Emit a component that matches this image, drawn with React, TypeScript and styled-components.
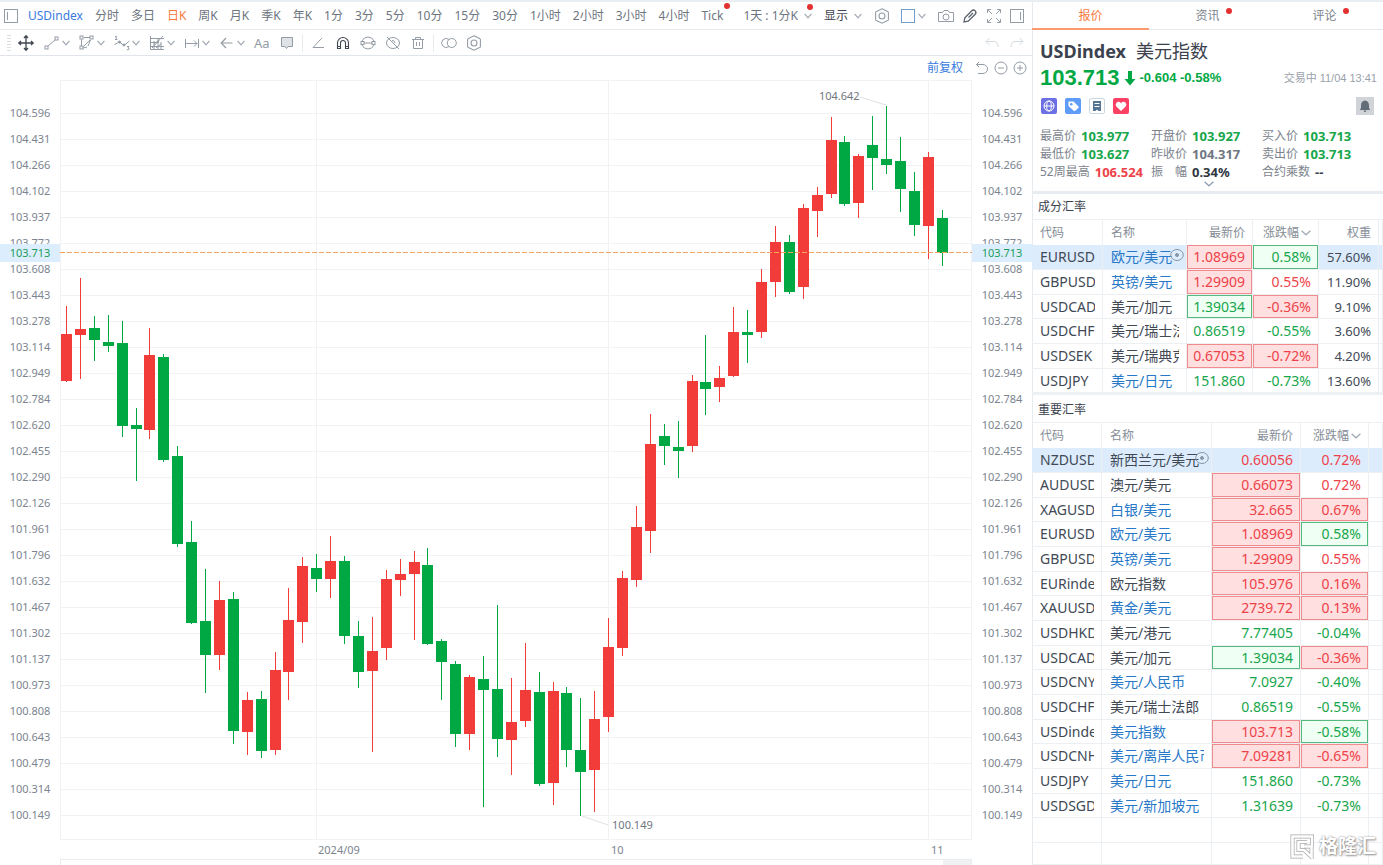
import React from "react";
import styled, { createGlobalStyle, css } from "styled-components";

const RED = "#f23c3a";
const GREEN = "#00a843";
const LINE = "#edf0f3";
const ICON = "#949ca6";

const GlobalStyle = createGlobalStyle`
  *, *::before, *::after { box-sizing: border-box; }
  body {
    margin: 0;
    background: #fff;
    color: #3b424d;
    font-family: "Noto Sans", "Noto Sans CJK SC", sans-serif;
    font-size: 12px;
    line-height: 18px;
  }
  button {
    margin: 0;
    padding: 0;
    border: 0;
    background: none;
    color: inherit;
    font: inherit;
    white-space: nowrap;
    cursor: pointer;
  }
  svg { display: block; }
`;

/* ---------- page frame ---------- */

const Page = styled.div`
  display: grid;
  grid-template-columns: minmax(0, 1fr) 351px;
  min-height: 100vh;
  border-top: 2px solid #e9eef3;
`;

const ChartPanel = styled.main`
  display: flex;
  flex-direction: column;
  min-width: 0;
`;

const SidePanel = styled.aside`
  position: relative;
  display: flex;
  flex-direction: column;
  box-shadow: inset 1px 0 #e6ebf0;
`;

/* ---------- toolbars ---------- */

const PeriodBar = styled.nav`
  display: flex;
  align-items: center;
  gap: 12px;
  height: 28px;
  padding: 0 8px 0 4px;
  border-bottom: 1px solid #e4e9ee;
  color: #6d7580;
`;

const DrawBar = styled.div`
  display: flex;
  align-items: center;
  gap: 9px;
  height: 26px;
  padding: 0 7px;
  border-bottom: 1px solid #dfe5ea;
  color: #8d96a1;
`;

const ViewBar = styled.div`
  display: flex;
  align-items: center;
  justify-content: flex-end;
  gap: 12px;
  height: 24px;
  padding-right: 5px;
  color: #9199a3;
`;

const toneColor = { plain: "inherit", active: "#f77a3c", link: "#3a7be0", dark: "#3f4650" };

const BarButton = styled.button<{ $tone?: keyof typeof toneColor }>`
  position: relative;
  display: flex;
  align-items: center;
  gap: 6px;
  color: ${(p) => toneColor[p.$tone ?? "plain"]};
`;

const IconButton = styled.button<{ $tone?: string }>`
  display: flex;
  align-items: center;
  gap: 2px;
  color: ${(p) => p.$tone ?? ICON};
`;

const TextTool = styled(IconButton)`
  font-size: 13px;
`;

const Dot = styled.i<{ $top: number; $right: number }>`
  position: absolute;
  top: ${(p) => p.$top}px;
  right: ${(p) => p.$right}px;
  width: 6px;
  height: 6px;
  border-radius: 50%;
  background: #e53030;
`;

const Divider = styled.i<{ $pull: number }>`
  width: 1px;
  height: 18px;
  margin: 0 -${(p) => p.$pull}px;
  background: #e8ecf0;
`;

const Grip = styled.i`
  width: 4px;
  height: 16px;
  margin-right: -3px;
  background: repeating-linear-gradient(#d9dee3 0 1px, transparent 1px 3px);
`;

const Toolset = styled.div<{ $gap: number; $end?: boolean }>`
  display: flex;
  align-items: center;
  gap: ${(p) => p.$gap}px;
  margin-left: ${(p) => (p.$end ? "auto" : "0")};
`;

/* ---------- chart ---------- */

const ChartGrid = styled.div`
  position: relative;
  flex: 1;
  display: grid;
  grid-template-columns: 60px minmax(0, 1fr) 60px;
  min-height: 560px;
`;

const Axis = styled.ol`
  position: relative;
  display: flex;
  flex-direction: column;
  margin: 0;
  padding: 20px 0 12px;
  list-style: none;
  color: #7c848f;
  font-size: 11px;
  line-height: 14px;
`;

const AxisLabel = styled.li`
  flex: 1;
  display: flex;
  align-items: center;
  justify-content: center;
`;

const PriceTag = styled.li`
  position: absolute;
  top: 164px;
  left: 0;
  right: 0;
  height: 18px;
  line-height: 18px;
  text-align: center;
  background: #dceefe;
  color: #1a9c5b;
`;

const Plot = styled.div`
  position: relative;
`;

const PlotSvg = styled.svg`
  position: absolute;
  inset: 0;
  width: 100%;
  height: 100%;
`;

const Callout = styled.span<{ $x: number; $y: number }>`
  position: absolute;
  left: ${(p) => p.$x}%;
  top: ${(p) => p.$y}%;
  padding-left: 2px;
  color: #6f7680;
  font-size: 11px;
  line-height: 16px;
`;

const DateRow = styled.div`
  display: grid;
  grid-template-columns: 258fr 293fr 320fr 41fr;
  height: 19px;
  margin: 0 60px;
  color: #7c848f;
  font-size: 11px;
  line-height: 20px;
`;

const ScrollStrip = styled.div`
  display: flex;
  justify-content: flex-end;
  height: 6px;
  margin: 0 60px;
  border: 1px solid #e9edf0;
  border-bottom: 0;
`;

const ScrollThumb = styled.div`
  width: 28px;
  background: #f0f1f2;
`;

/* ---------- quote header ---------- */

const Tabs = styled.div`
  display: grid;
  grid-template-columns: repeat(3, 1fr);
  height: 28px;
  border-bottom: 1px solid #e4e9ee;
`;

const Tab = styled.button<{ $active?: boolean }>`
  position: relative;
  height: 28px;
  padding-top: 2px;
  color: ${(p) => (p.$active ? "#f77a3c" : "#7c838d")};
  border-bottom: 2px solid ${(p) => (p.$active ? "#fb9a6c" : "transparent")};
`;

const TabLabel = styled.span`
  position: relative;
`;

const Quote = styled.section`
  height: 164px;
  padding: 9px 6px 0 8px;
  border-bottom: 3px solid #e8ecf0;
`;

const Title = styled.h1`
  display: flex;
  gap: 10px;
  margin: 0;
  font-size: 18px;
  line-height: 24px;
  font-weight: 700;
`;

const TitleName = styled.span`
  font-weight: 400;
`;

const PriceRow = styled.div`
  display: flex;
  align-items: center;
  gap: 4px;
  height: 30px;
  color: ${GREEN};
  font-family: "Liberation Sans", sans-serif;
  font-weight: 700;
`;

const Price = styled.strong`
  font-size: 22px;
`;

const Change = styled.span`
  font-size: 13px;
`;

const Status = styled.span`
  margin-left: auto;
  color: #9aa1ab;
  font: 400 11px/18px "Liberation Sans", "Noto Sans CJK SC", sans-serif;
`;

const BadgeRow = styled.div`
  display: flex;
  align-items: center;
  gap: 8px;
  height: 18px;
  margin: 4px 3px 0 1px;
`;

const Badge = styled.button<{ $bg: string }>`
  display: flex;
  width: 16px;
  height: 16px;
  border-radius: 2px;
  background: ${(p) => p.$bg};
`;

const Bell = styled(Badge)`
  width: 18px;
  height: 18px;
  margin-left: auto;
  padding: 1px;
  border-radius: 0;
`;

const Stats = styled.dl`
  display: grid;
  grid-template-columns: 111px 111px 1fr;
  margin: 12px 0 0;
`;

const Stat = styled.div`
  display: flex;
  gap: 5px;
  white-space: nowrap;
`;

const StatLabel = styled.dt`
  color: #7c838d;
`;

const StatValue = styled.dd<{ $color: string }>`
  margin: 0;
  color: ${(p) => p.$color};
  font-size: 13px;
  font-weight: 700;
`;

const MoreButton = styled.button`
  display: block;
  margin: 0 auto;
`;

/* ---------- rate tables ---------- */

const SectionTitle = styled.h2<{ $height: number }>`
  height: ${(p) => p.$height}px;
  margin: 0;
  padding-left: 6px;
  border-bottom: 1px solid ${LINE};
  font-size: 12px;
  font-weight: 400;
  line-height: ${(p) => p.$height - 1}px;
`;

const RateTable = styled.table`
  width: 100%;
  table-layout: fixed;
  border-collapse: separate;
  border-spacing: 0;
  color: #414955;
  & + h2 { border-top: 2px solid #eef1f4; }
`;

const Row = styled.tr<{ $selected?: boolean }>`
  height: 25px;
  background: ${(p) => (p.$selected ? "#dcecfd" : "transparent")};
  &:nth-child(3n) { height: 24px; }
  &:nth-child(17) { height: 22px; }
`;

const HeadCell = styled.th<{ $right?: boolean }>`
  height: 25px;
  padding: 0 7px 0 8px;
  border-right: 1px solid ${LINE};
  color: #858c96;
  font-size: 12px;
  font-weight: 400;
  line-height: 24px;
  text-align: ${(p) => (p.$right ? "right" : "left")};
  white-space: nowrap;
`;

const SortLabel = styled.button`
  display: inline-flex;
  align-items: center;
  gap: 2px;
`;

type Mark = "r" | "g" | "";
const boxed = {
  r: css`background: #ffdfdf; box-shadow: inset 0 0 0 1px #f18a8c;`,
  g: css`background: #effff4; box-shadow: inset 0 0 0 1px #55b97d;`,
};

const Cell = styled.td`
  position: relative;
  padding: 0 7px 0 8px;
  border-right: 1px solid ${LINE};
  border-bottom: 1px solid ${LINE};
  font-size: 14px;
  line-height: 22px;
`;

const NumCell = styled(Cell)<{ $up: boolean; $box?: Mark }>`
  padding: 0 7px 0 0;
  color: ${(p) => (p.$up ? "#ee4249" : "#17a64b")};
  text-align: right;
  ${(p) => (p.$box ? boxed[p.$box] : "")}
`;

const WeightCell = styled(Cell)`
  padding: 0 7px 0 0;
  font-size: 13px;
  text-align: right;
`;

const Clip = styled.div<{ $link?: boolean }>`
  overflow: hidden;
  white-space: nowrap;
  color: ${(p) => (p.$link ? "#2878c8" : "inherit")};
`;

const Eye = styled.svg`
  position: absolute;
  top: 3px;
  right: 2px;
`;

const Watermark = styled.div`
  position: absolute;
  right: 7px;
  bottom: 6px;
  display: flex;
  align-items: center;
  gap: 4px;
  color: #fff;
  font-size: 19px;
  font-weight: 700;
  line-height: 26px;
  text-shadow: 0 0 2px #888, 1px 1px 2px #999;
`;

/* ---------- icons ---------- */

const Icon = ({ children, size = 16, w = 1 }: { children: React.ReactNode; size?: number; w?: number }) => (
  <svg width={size} height={size} viewBox={`0 0 ${size} ${size}`} fill="none" stroke="currentColor" strokeWidth={w} aria-hidden="true">
    {children}
  </svg>
);

const Chevron = ({ color = "#a3abb5", width = 8 }: { color?: string; width?: number }) => (
  <svg width={width} height="6" viewBox={`0 0 ${width} 6`} fill="none" stroke={color} strokeWidth="1.3" aria-hidden="true">
    <path d={`M.6 .8 ${width / 2} 4.800 ${width - 0.6} .8`} />
  </svg>
);

const HexIcon = () => (
  <Icon w={1.1}>
    <path d="M8 .8 13.6 3.4Q14.4 3.8 14.4 4.6V11.4Q14.4 12.2 13.6 12.6L8 15.2 2.4 12.6Q1.6 12.2 1.6 11.4V4.6Q1.6 3.8 2.4 3.4Z" />
    <circle cx="8" cy="8" r="3" />
  </Icon>
);

const drawMenus: [string, React.ReactNode][] = [
  ["线段", <Icon key="a"><rect x="11" y="2" width="3" height="3" /><rect x="1" y="11" width="3" height="3" /><path d="M4 11 11 5" /></Icon>],
  ["形状", <Icon key="b"><path d="M2.500 4.500V11M5 2.500H11M11.500 5 9 11M8 12 4 13M4.500 11.500 11 5" /><rect x="1" y="1" width="3" height="3" /><rect x="11" y="1" width="3" height="3" /><rect x="1" y="11" width="3" height="3" /></Icon>],
  ["波浪", <Icon key="c"><path d="M.5 9.500 5.500 7 10 10.500 15.500 6M1 2 2.200 1V4.500M1 4.500H3.400M13 11.500H15L14 12.800Q15.500 13 15 14.200 14.300 15.300 12.800 14.600" /><circle cx="5.5" cy="7" r="1" fill="currentColor" /><circle cx="10" cy="10" r="1" fill="currentColor" /></Icon>],
  ["斐波那契", <Icon key="d"><path d="M1.500 1V14.500H15M1.500 3.500H15M1.500 7.500H10M1.500 11.500H15M5 14V6M9 14V3.500M12 14V7M3 13 14 1M5 9 10 5M7 13 12 9" /></Icon>],
  ["测量", <Icon key="e"><path d="M1.500 4V13M14.500 4V13M2 8.500H13M10 5.500 13 8.500 10 11.500" /></Icon>],
  ["箭头", <Icon key="f" w={1.2}><path d="M2.500 8H13.500M7 3 2.200 8 7 13" /></Icon>],
];

/* ---------- data ---------- */

const periods = ["分时", "多日", "日K", "周K", "月K", "季K", "年K", "1分", "3分", "5分", "10分", "15分", "30分", "1小时", "2小时", "3小时", "4小时"];

const prices = [
  "104.596", "104.431", "104.266", "104.102", "103.937", "103.772", "103.608", "103.443", "103.278", "103.114",
  "102.949", "102.784", "102.620", "102.455", "102.290", "102.126", "101.961", "101.796", "101.632", "101.467",
  "101.302", "101.137", "100.973", "100.808", "100.643", "100.479", "100.314", "100.149",
];

/* direction, then high, body top, body bottom and low on the plot's vertical scale */
const candles: [Mark, number, number, number, number][] = [
  ["r", 306, 334, 381, 382], ["r", 278, 329, 335, 379], ["g", 316, 328, 340, 361], ["g", 315, 342, 346, 352],
  ["g", 321, 343, 426, 437], ["g", 408, 425, 429, 481], ["r", 328, 355, 430, 439], ["g", 354, 357, 460, 462],
  ["g", 446, 456, 544, 547], ["g", 521, 542, 623, 624], ["g", 569, 621, 655, 693], ["r", 581, 600, 655, 670],
  ["g", 592, 599, 731, 744], ["r", 692, 700, 732, 755], ["g", 691, 699, 751, 758], ["r", 652, 670, 750, 755],
  ["r", 588, 620, 672, 700], ["r", 557, 566, 622, 643], ["g", 554, 568, 579, 592], ["r", 536, 561, 579, 598],
  ["g", 556, 561, 636, 644], ["g", 621, 636, 672, 688], ["r", 617, 651, 671, 752], ["r", 570, 579, 648, 660],
  ["r", 559, 574, 580, 596], ["r", 551, 562, 574, 640], ["g", 548, 565, 644, 645], ["g", 639, 641, 662, 700],
  ["g", 661, 664, 734, 747], ["r", 675, 677, 734, 750], ["g", 656, 679, 690, 807], ["g", 605, 689, 739, 757],
  ["r", 678, 722, 740, 775], ["r", 643, 690, 721, 727], ["g", 672, 692, 784, 786], ["r", 682, 691, 783, 805],
  ["g", 687, 693, 750, 767], ["g", 698, 750, 772, 816], ["r", 691, 719, 770, 812], ["r", 618, 647, 717, 732],
  ["r", 571, 578, 648, 656], ["r", 506, 527, 580, 587], ["r", 414, 444, 531, 553], ["g", 424, 436, 446, 465],
  ["g", 421, 447, 451, 478], ["r", 375, 381, 446, 452], ["g", 335, 382, 389, 415], ["r", 366, 378, 387, 402],
  ["r", 307, 332, 376, 377], ["g", 310, 332, 335, 363], ["r", 269, 282, 332, 338], ["r", 226, 242, 282, 297],
  ["g", 235, 242, 292, 294], ["r", 204, 208, 287, 299], ["r", 187, 195, 211, 237], ["r", 117, 140, 194, 198],
  ["g", 136, 142, 204, 206], ["r", 154, 156, 203, 218], ["g", 116, 145, 158, 190], ["g", 106, 159, 165, 174],
  ["g", 137, 161, 189, 212], ["g", 172, 191, 225, 236], ["r", 152, 157, 226, 259], ["g", 210, 218, 253, 266],
];

const stats: [string, string, string][] = [
  ["最高价", "103.977", "#17a64b"], ["开盘价", "103.927", "#17a64b"], ["买入价", "103.713", "#17a64b"],
  ["最低价", "103.627", "#17a64b"], ["昨收价", "104.317", "#6f7782"], ["卖出价", "103.713", "#17a64b"],
  ["52周最高", "106.524", "#ee4249"], ["振\u3000幅", "0.34%", "#2f3742"], ["合约乘数", "--", "#3b424d"],
];

interface Rate {
  code: string;
  name: string;
  link?: boolean;
  price: string;
  priceUp: boolean;
  priceBox?: Mark;
  pct: string;
  pctUp: boolean;
  pctBox?: Mark;
  weight?: string;
}

const rate = (code: string, name: string, link: boolean, price: string, p: string, pct: string, c: string, weight?: string): Rate => ({
  code, name, link, price, pct, weight,
  priceUp: p[0] === "u",
  priceBox: (p[1] ?? "") as Mark,
  pctUp: c[0] === "u",
  pctBox: (c[1] ?? "") as Mark,
});

const components: Rate[] = [
  rate("EURUSD", "欧元/美元", true, "1.08969", "ur", "0.58%", "dg", "57.60%"),
  rate("GBPUSD", "英镑/美元", true, "1.29909", "ur", "0.55%", "u", "11.90%"),
  rate("USDCAD", "美元/加元", false, "1.39034", "dg", "-0.36%", "ur", "9.10%"),
  rate("USDCHF", "美元/瑞士法郎", false, "0.86519", "d", "-0.55%", "d", "3.60%"),
  rate("USDSEK", "美元/瑞典克朗", false, "0.67053", "ur", "-0.72%", "ur", "4.20%"),
  rate("USDJPY", "美元/日元", true, "151.860", "d", "-0.73%", "d", "13.60%"),
];

const majors: Rate[] = [
  rate("NZDUSD", "新西兰元/美元", false, "0.60056", "u", "0.72%", "u"),
  rate("AUDUSD", "澳元/美元", false, "0.66073", "ur", "0.72%", "u"),
  rate("XAGUSD", "白银/美元", true, "32.665", "ur", "0.67%", "ur"),
  rate("EURUSD", "欧元/美元", true, "1.08969", "ur", "0.58%", "dg"),
  rate("GBPUSD", "英镑/美元", true, "1.29909", "ur", "0.55%", "u"),
  rate("EURindex", "欧元指数", false, "105.976", "ur", "0.16%", "ur"),
  rate("XAUUSD", "黄金/美元", true, "2739.72", "ur", "0.13%", "ur"),
  rate("USDHKD", "美元/港元", false, "7.77405", "d", "-0.04%", "d"),
  rate("USDCAD", "美元/加元", false, "1.39034", "dg", "-0.36%", "ur"),
  rate("USDCNY", "美元/人民币", true, "7.0927", "d", "-0.40%", "d"),
  rate("USDCHF", "美元/瑞士法郎", false, "0.86519", "d", "-0.55%", "d"),
  rate("USDindex", "美元指数", true, "103.713", "ur", "-0.58%", "dg"),
  rate("USDCNH", "美元/离岸人民币", true, "7.09281", "ur", "-0.65%", "ur"),
  rate("USDJPY", "美元/日元", true, "151.860", "d", "-0.73%", "d"),
  rate("USDSGD", "美元/新加坡元", true, "1.31639", "d", "-0.73%", "d"),
];

/* ---------- pieces ---------- */

function PriceAxis() {
  return (
    <Axis>
      {prices.map((p) => <AxisLabel key={p}>{p}</AxisLabel>)}
      <PriceTag>103.713</PriceTag>
    </Axis>
  );
}

function CandlePlot() {
  return (
    <Plot>
      <PlotSvg viewBox="60 80 912 760" preserveAspectRatio="none" role="img" aria-label="USDindex 日K">
        <g fill="#f0f2f3">
          {prices.map((p, i) => <rect key={p} x="60" y={113 + i * 26} width="912" height="1" />)}
          {[60, 316, 608, 928, 971].map((x) => <rect key={x} x={x} y="80" width="1" height="760" />)}
          <rect x="60" y="80" width="912" height="1" />
          <rect x="60" y="839" width="912" height="1" />
        </g>
        <path d="M860 97 886 105M582 816 608 825" stroke="#dde1e5" fill="none" />
        {candles.map(([dir, high, top, bottom, low], i) => {
          const x = Math.round(61 + i * 13.9);
          return (
            <g key={i} fill={dir === "r" ? RED : GREEN}>
              <rect x={x + 5} y={high} width="1" height={low - high} />
              <rect x={x} y={top} width="11" height={bottom - top} />
            </g>
          );
        })}
        <line x1="60" y1="252.5" x2="972" y2="252.5" stroke="#f5a35f" strokeDasharray="5 2" />
      </PlotSvg>
      <Callout $x={83} $y={1}>104.642</Callout>
      <Callout $x={60} $y={97}>&nbsp;100.149</Callout>
    </Plot>
  );
}

function Rates({ rows, widths, blanks = 0 }: { rows: Rate[]; widths: number[]; blanks?: number }) {
  const weighted = rows[0].weight !== undefined;
  return (
    <RateTable>
      <colgroup>
        {widths.map((w, i) => <col key={i} width={w} />)}
        <col />
      </colgroup>
      <thead>
        <tr>
          <HeadCell>代码</HeadCell>
          <HeadCell>名称</HeadCell>
          <HeadCell $right>最新价</HeadCell>
          <HeadCell $right><SortLabel>涨跌幅<Chevron width={10} /></SortLabel></HeadCell>
          {weighted && <HeadCell $right>权重</HeadCell>}
          <HeadCell aria-hidden="true" />
        </tr>
      </thead>
      <tbody>
        {rows.map((r, i) => (
          <Row key={r.code} $selected={i === 0}>
            <Cell><Clip>{r.code}</Clip></Cell>
            <Cell>
              <Clip $link={r.link}>{r.name}</Clip>
              {i === 0 && (
                <Eye width="14" height="14" viewBox="0 0 14 14" fill="none" stroke="#8b97a5" aria-hidden="true">
                  <ellipse cx="7" cy="7" rx="6.300" ry="5.500" />
                  <circle cx="7" cy="7" r="1.500" fill="#8b97a5" />
                </Eye>
              )}
            </Cell>
            <NumCell $up={r.priceUp} $box={r.priceBox}>{r.price}</NumCell>
            <NumCell $up={r.pctUp} $box={r.pctBox}>{r.pct}</NumCell>
            {weighted && <WeightCell>{r.weight}</WeightCell>}
            <Cell />
          </Row>
        ))}
        {Array.from({ length: blanks }, (_, i) => (
          <Row key={`blank-${i}`}><Cell /><Cell /><Cell /><Cell /><Cell /></Row>
        ))}
      </tbody>
    </RateTable>
  );
}

export default function App() {
  return (
    <>
      <GlobalStyle />
      <Page>
        <ChartPanel>
          <PeriodBar>
            <Toolset $gap={10}>
              <IconButton aria-label="侧栏"><Icon size={14}><rect x=".5" y=".5" width="13" height="13" /><path d="M3.500 3V11" /></Icon></IconButton>
              <BarButton $tone="link">USDindex</BarButton>
            </Toolset>
            {periods.map((p) => <BarButton key={p} $tone={p === "日K" ? "active" : "plain"}>{p}</BarButton>)}
            <BarButton>Tick<Dot $top={-4} $right={-7} /></BarButton>
            <Divider $pull={2} />
            <BarButton>1天 : 1分K<Chevron /><Dot $top={-3} $right={-1} /></BarButton>
            <BarButton $tone="dark">显示<Chevron /></BarButton>
            <Divider $pull={6} />
            <Toolset $gap={10}>
              <IconButton aria-label="设置"><HexIcon /></IconButton>
              <IconButton aria-label="布局">
                <Icon><rect x="1.500" y="1.500" width="13" height="13" stroke="#6f9fca" /></Icon>
                <Chevron />
              </IconButton>
            </Toolset>
            <Toolset $gap={8} $end>
              <IconButton aria-label="截图">
                <Icon><path d="M.5 4.500H4.500L6 2.500H10L11.500 4.500H15.500V13.500H.5Z" /><circle cx="8" cy="9" r="3" /></Icon>
              </IconButton>
              <IconButton aria-label="画笔" $tone="#5a626d">
                <Icon w={1.3}><path d="M2 14 2.800 9.800 9.800 2.800Q11.500 1.200 13.200 2.900 14.700 4.600 13.200 6.200L6.200 13.200ZM6.500 9.500 11 5" /></Icon>
              </IconButton>
              <IconButton aria-label="全屏">
                <Icon><path d="M1.500 5V1.500H5M11 1.500H14.500V5M14.500 11V14.500H11M5 14.500H1.500V11M2 2 6 6M14 2 10 6M14 14 10 10M2 14 6 10" /></Icon>
              </IconButton>
              <IconButton aria-label="面板">
                <Icon size={14}><rect x=".5" y=".5" width="13" height="13" /><path d="M10.500 3V11" /></Icon>
              </IconButton>
            </Toolset>
          </PeriodBar>

          <DrawBar>
            <Grip />
            <IconButton aria-label="移动" $tone="#3f4650">
              <Icon size={18} w={1.3}><path d="M9 2V16M2 9H16M7 4 9 1.800 11 4M7 14 9 16.200 11 14M4 7 1.800 9 4 11M14 7 16.200 9 14 11" /></Icon>
            </IconButton>
            {drawMenus.map(([label, icon]) => (
              <IconButton key={label} aria-label={label}>{icon}<Chevron /></IconButton>
            ))}
            <TextTool>Aa</TextTool>
            <IconButton aria-label="注释">
              <Icon><path d="M2.500 2.500H13.500V11.500H9L7.500 13.500 6 11.500H2.500Z" fill="#dfe3e7" /></Icon>
            </IconButton>
            <Divider $pull={2} />
            <IconButton aria-label="角度"><Icon><path d="M12 3 3 12.500H14" /></Icon></IconButton>
            <IconButton aria-label="磁铁" $tone="#3f4650">
              <Icon w={1.1}><path d="M2.500 13.500V8A5.500 5.500 0 0 1 13.500 8V13.500H10.500V8A2.500 2.500 0 0 0 5.500 8V13.500ZM2.500 11.500H5.500M10.500 11.500H13.500" /></Icon>
            </IconButton>
            <IconButton aria-label="同步">
              <Icon><path d="M2 6A6.500 6.500 0 0 1 14 6M2 10A6.500 6.500 0 0 0 14 10M4 8H12" /><rect x="1" y="6.500" width="3" height="3" /><rect x="12" y="6.500" width="3" height="3" /></Icon>
            </IconButton>
            <IconButton aria-label="隐藏">
              <Icon><path d="M8 2.500A6.500 5.500 0 1 0 8 13.500 6.500 5.500 0 1 0 8 2.500M2 2 14 14M7 5.500Q9.500 5 10 8" /></Icon>
            </IconButton>
            <IconButton aria-label="删除">
              <Icon><path d="M2 4.500H14M5.500 4.500V2.500H10.500V4.500M3.500 4.500V13.500H12.500V4.500M6.500 7V11M9.500 7V11" /></Icon>
            </IconButton>
            <Divider $pull={2} />
            <IconButton aria-label="对比">
              <Icon><path d="M8 4.500A4.500 4.500 0 1 0 8 11.500" /><circle cx="10.800" cy="8" r="4.500" /></Icon>
            </IconButton>
            <IconButton aria-label="绘图设置"><HexIcon /></IconButton>
            <Toolset $gap={9} $end>
              <IconButton aria-label="撤销" $tone="#d5dade"><Icon><path d="M5.500 3 2 6.500 5.500 10M2 6.500H10Q14 6.500 14 12" /></Icon></IconButton>
              <IconButton aria-label="重做" $tone="#d5dade"><Icon><path d="M10.500 3 14 6.500 10.500 10M14 6.500H6Q2 6.500 2 12" /></Icon></IconButton>
            </Toolset>
          </DrawBar>

          <ViewBar>
            <BarButton $tone="link">前复权</BarButton>
            <Toolset $gap={5}>
              <IconButton aria-label="还原"><Icon size={14}><path d="M4 1 1.500 3.500 4 6M1.500 3.500H8A4.500 4.500 0 0 1 8 12.500H3" /></Icon></IconButton>
              <IconButton aria-label="缩小"><Icon size={14}><circle cx="7" cy="7" r="6" /><path d="M4 7H10" /></Icon></IconButton>
              <IconButton aria-label="放大"><Icon size={14}><circle cx="7" cy="7" r="6" /><path d="M4 7H10M7 4V10" /></Icon></IconButton>
            </Toolset>
          </ViewBar>

          <ChartGrid>
            <PriceAxis />
            <CandlePlot />
            <PriceAxis />
          </ChartGrid>
          <DateRow>
            <span />
            <span>2024/09</span>
            <span>10</span>
            <span>11</span>
          </DateRow>
          <ScrollStrip><ScrollThumb /></ScrollStrip>
        </ChartPanel>

        <SidePanel>
          <Tabs>
            <Tab $active>报价</Tab>
            <Tab><TabLabel>资讯<Dot $top={1} $right={-12} /></TabLabel></Tab>
            <Tab><TabLabel>评论<Dot $top={1} $right={-12} /></TabLabel></Tab>
          </Tabs>
          <Quote>
            <Title>USDindex <TitleName>美元指数</TitleName></Title>
            <PriceRow>
              <Price>103.713</Price>
              <svg width="12" height="16" viewBox="0 0 12 16" fill={GREEN} aria-hidden="true">
                <path d="M4 1H8V9H11.500L6 15.500.5 9H4Z" />
              </svg>
              <Change>-0.604 -0.58%</Change>
              <Status>交易中 11/04 13:41</Status>
            </PriceRow>
            <BadgeRow>
              <Badge $bg="#6c70e4" aria-label="全球">
                <svg width="16" height="16" viewBox="0 0 16 16" fill="none" stroke="#fff"><circle cx="8" cy="8" r="5" /><ellipse cx="8" cy="8" rx="2.300" ry="5" /><path d="M3 8H13" /></svg>
              </Badge>
              <Badge $bg="#5f9cf8" aria-label="标签">
                <svg width="16" height="16" viewBox="0 0 16 16" fill="#fff"><path d="M3.500 3.500H8.500L13.500 8.500Q14 9.200 13.500 9.800L10 13Q9.300 13.300 8.700 12.800L3.500 8Z" /><circle cx="6.300" cy="6.300" r="1.300" fill="#5f9cf8" /></svg>
              </Badge>
              <Badge $bg="#fff" aria-label="公告">
                <svg width="16" height="16" viewBox="0 0 16 16" fill="none"><rect x=".5" y=".5" width="15" height="15" rx="1.500" stroke="#cbd6df" /><path d="M4 3H12V13H9.500L8 11.500 6.500 13H4Z" fill="#557593" /><path d="M5.500 5.500H10.500M5.500 8.500H10.500" stroke="#fff" /></svg>
              </Badge>
              <Badge $bg="#fb4264" aria-label="自选">
                <svg width="16" height="16" viewBox="0 0 16 16" fill="#fff"><path d="M8 13 3.500 8.800Q1.700 6.600 3.400 4.700 5.900 2.700 8 5.200 10.100 2.700 12.600 4.700 14.300 6.600 12.500 8.800Z" /></svg>
              </Badge>
              <Bell $bg="#d0d4d8" aria-label="提醒">
                <svg width="16" height="16" viewBox="0 0 16 16" fill="#636d78"><path d="M8 2.500Q12 3 12 7.500V10L13 11.500V12H3V11.500L4 10V7.500Q4 3 8 2.500ZM6.500 12.500H9.500Q9 14 8 14T6.500 12.500Z" /></svg>
              </Bell>
            </BadgeRow>
            <Stats>
              {stats.map(([label, value, color]) => (
                <Stat key={label}>
                  <StatLabel>{label}</StatLabel>
                  <StatValue $color={color}>{value}</StatValue>
                </Stat>
              ))}
            </Stats>
            <MoreButton aria-label="展开"><Chevron color="#8fa0b3" width={10} /></MoreButton>
          </Quote>

          <SectionTitle $height={26}>成分汇率</SectionTitle>
          <Rates rows={components} widths={[71, 84, 66, 66, 60]} />
          <SectionTitle $height={30}>重要汇率</SectionTitle>
          <Rates rows={majors} widths={[70, 110, 89, 68]} blanks={2} />

          <Watermark>
            <svg width="25" height="25" viewBox="0 0 25 25" fill="none" aria-hidden="true">
              <path d="M13 22.500H2.500V2.500H22V13M17 8H8.500V16H14L21.500 23V12.500H14" stroke="#a5a5a5" strokeWidth="4" />
              <path d="M13 22.500H2.500V2.500H22V13M17 8H8.500V16H14L21.500 23V12.500H14" stroke="#fff" strokeWidth="2.600" />
            </svg>
            格隆汇
          </Watermark>
        </SidePanel>
      </Page>
    </>
  );
}
